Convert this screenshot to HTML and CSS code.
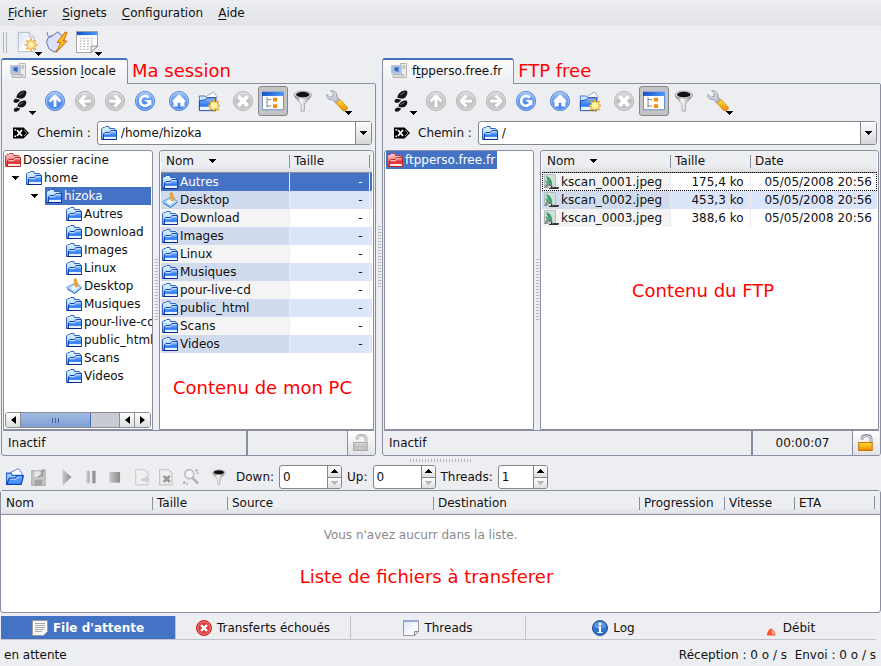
FILE: index.html
```html
<!DOCTYPE html>
<html lang="fr">
<head>
<meta charset="utf-8">
<title>Client FTP</title>
<link rel="stylesheet" href="styles.css">
</head>
<body>
<svg class="defs" aria-hidden="true">
  <defs>
    <linearGradient id="gBlue" x1="0" y1="0" x2="0" y2="1"><stop offset="0" stop-color="#a9c8fb"/><stop offset=".5" stop-color="#5a92ee"/><stop offset="1" stop-color="#3f82f4"/></linearGradient>
    <linearGradient id="gGrey" x1="0" y1="0" x2="0" y2="1"><stop offset="0" stop-color="#dedede"/><stop offset=".5" stop-color="#bfbfbf"/><stop offset="1" stop-color="#cbcbcb"/></linearGradient>
    <linearGradient id="gFold" x1="0" y1="0" x2="0" y2="1"><stop offset="0" stop-color="#e3f4ff"/><stop offset=".5" stop-color="#b5dafb"/><stop offset="1" stop-color="#3f80ec"/></linearGradient>
    <linearGradient id="gFront" x1="0" y1="0" x2="0" y2="1"><stop offset="0" stop-color="#8dbcfb"/><stop offset=".65" stop-color="#2474f2"/><stop offset=".75" stop-color="#e8f3ff"/></linearGradient>
    <linearGradient id="gRed" x1="0" y1="0" x2="0" y2="1"><stop offset="0" stop-color="#ffdada"/><stop offset="1" stop-color="#e02020"/></linearGradient>
    <linearGradient id="gRedFront" x1="0" y1="0" x2="0" y2="1"><stop offset="0" stop-color="#f08080"/><stop offset=".65" stop-color="#df2525"/><stop offset=".75" stop-color="#ffe8e8"/></linearGradient>
    <linearGradient id="gPage" x1="0" y1="0" x2="1" y2="1"><stop offset="0" stop-color="#d9e3fb"/><stop offset=".7" stop-color="#fff"/></linearGradient>
    <linearGradient id="gBar" x1="0" y1="0" x2="1" y2="0"><stop offset="0" stop-color="#174fc4"/><stop offset="1" stop-color="#4c9cff"/></linearGradient>
    <linearGradient id="gGold" x1="0" y1="0" x2="0" y2="1"><stop offset="0" stop-color="#ffe23a"/><stop offset="1" stop-color="#f48a00"/></linearGradient>
    <linearGradient id="gSteel" x1="0" y1="0" x2="1" y2="1"><stop offset="0" stop-color="#fff"/><stop offset="1" stop-color="#a3a9bf"/></linearGradient>
    <linearGradient id="gDark" x1="0" y1="0" x2="1" y2="0"><stop offset="0" stop-color="#c9c9c9"/><stop offset="1" stop-color="#8a8a8a"/></linearGradient>
    <linearGradient id="gCone" x1="0" y1="0" x2="1" y2="0"><stop offset="0" stop-color="#666"/><stop offset=".4" stop-color="#fff"/><stop offset="1" stop-color="#888"/></linearGradient>
  </defs>
  <symbol id="blue" viewBox="0 0 24 24"><circle cx="12" cy="12" r="10.5" fill="url(#gBlue)" stroke="#5b84c9"/><circle cx="12" cy="12" r="9.3" fill="none" stroke="#b7d0f8" stroke-width=".8"/></symbol>
  <symbol id="grey" viewBox="0 0 24 24"><circle cx="12" cy="12" r="10.5" fill="url(#gGrey)" stroke="#b3b3b3"/><circle cx="12" cy="12" r="9.3" fill="none" stroke="#dedede" stroke-width=".8"/></symbol>
  <symbol id="a-up" viewBox="0 0 24 24"><path d="M12 18.500V7M6 12.500 12 6.500 18 12.500" fill="none" stroke="#fff" stroke-width="3" stroke-linejoin="round"/></symbol>
  <symbol id="a-left" viewBox="0 0 24 24"><path d="M18.500 12H7M12.500 6 6.500 12 12.500 18" fill="none" stroke="#fff" stroke-width="3" stroke-linejoin="round"/></symbol>
  <symbol id="a-right" viewBox="0 0 24 24"><path d="M5.500 12H17M11.500 6 17.500 12 11.500 18" fill="none" stroke="#fff" stroke-width="3" stroke-linejoin="round"/></symbol>
  <symbol id="a-reload" viewBox="0 0 24 24"><path d="M16 8.2A5.4 5.4 0 1 0 17 14" fill="none" stroke="#fff" stroke-width="3"/><path d="M11 11h8v6z" fill="#fff"/></symbol>
  <symbol id="a-home" viewBox="0 0 24 24"><path d="m12 4.500 8 8h-2V18h-4.500v-4h-3v4H6v-5.500H4z" fill="#fff"/></symbol>
  <symbol id="a-x" viewBox="0 0 24 24"><path d="m7 7 10 10m0-10L7 17" stroke="#fff" stroke-width="4"/></symbol>
  <symbol id="feet" viewBox="0 0 24 24"><g fill="#151515"><path d="M7 8.500C7 4 12 0 16 .5c3 .5 2 4.500 0 7-1 1.200-2.500 1.500-4 2z"/><path d="M6.500 9.500 11 10.500c-1 3-4.500 4-6.500 3-1.500-1.500-.5-3.500 2-4z"/><path d="M8 18c.5-4 5-7.500 8.500-6.500 2.500 1.500 1 5-1 6.500-1 .8-2.500 1-4 1z"/><path d="m7 19 4 1c-.5 2.500-4 4.500-6 3.500-2-1.500-.5-4 2-4.500z"/></g><path d="M10 5.500 15 2.500M10 16l4.500-2.500" stroke="#777"/></symbol>
  <symbol id="newfolder" viewBox="0 0 24 24"><path d="m9 7 8-5 4 6-9 4z" fill="#fff" stroke="#7c8fb0" stroke-width=".8"/><path d="M1.500 20.500V6.500h6l2 2h9v12z" fill="#c9e5fc" stroke="#3d76c8"/><path d="M1.500 22.500V12l7-1.500 2-2h9v14z" fill="url(#gFront)" stroke="#15419f"/><path d="m17.500 10 1.300 3.500L22.500 12 21 15.500l3 1.500-3 1.500 1.500 3.500-3.700-1.500-1.300 3.500-1.300-3.500-3.700 1.500 1.500-3.500-3-1.500 3-1.500-1.500-3.500 3.700 1.500z" fill="#fff5a0" stroke="#e79a10"/></symbol>
  <symbol id="treeview" viewBox="0 0 24 24"><path d="M.5 2.500h23v19H.5z" fill="#fff" stroke="#5c86cc"/><path d="M0 2h24v4.500H0z" fill="url(#gBar)"/><path d="M5.500 8v11M5.500 10.500H10M5.500 17.500H10" fill="none" stroke="#777"/><path d="M12 8.500h4.500v4H12zM12 15.500h4.500v4H12z" fill="#f08a12"/></symbol>
  <symbol id="filter" viewBox="0 0 24 24"><path d="M2.500 5c0 5 7.500 8 7.500 11v7h3.500v-7c0-3 7.500-6 7.500-11z" fill="url(#gCone)" stroke="#888" stroke-width=".7"/><ellipse cx="11.800" cy="5" rx="9.500" ry="3.800" fill="#e6e6e6" stroke="#999" stroke-width=".8"/><ellipse cx="11.800" cy="5" rx="7.500" ry="3" fill="#111"/></symbol>
  <symbol id="wrench" viewBox="0 0 24 24"><path d="M5 .8C8 0 12.500 2.500 12 7.500l3 3.500-4 3.500-4-4C3 11 .3 8.500.8 5l3.700 3L8 6.500 7.500 3z" fill="url(#gSteel)" stroke="#7f849b" stroke-width=".8"/><path d="m15 10 8 8.500c1 3-2 5-4.500 4L11 14.500z" fill="url(#gGold)" stroke="#c77b16" stroke-width=".8"/></symbol>
  <symbol id="folder" viewBox="0 0 16 16"><path d="M.5 14.500V4L2 2.500h1.500l1-1H8l.5 2h5l1 1.500v9.500z" fill="url(#gFold)" stroke="#2c63c4"/><path d="M2.500 14.500V9L4 7.500h4.500L10 5.500h5.500v9z" fill="url(#gFront)" stroke="#1747b4"/><path d="M1 14.500h14.500" stroke="#0c2a94"/><path d="M3.500 8.700h5l1.500-2h4.500" fill="none" stroke="#d5e9ff"/></symbol>
  <symbol id="rootfolder" viewBox="0 0 16 16"><path d="M.5 14.500V4L2 2.500h1.500l1-1H8l.5 2h5l1 1.500v9.500z" fill="url(#gRed)" stroke="#cf3838"/><path d="M2.500 14.500V9L4 7.500h4.500L10 5.500h5.500v9z" fill="url(#gRedFront)" stroke="#bd2626"/><path d="M3.500 8.700h5l1.500-2h4.500" fill="none" stroke="#ffdcdc"/></symbol>
  <symbol id="desktop" viewBox="0 0 16 16"><path d="m.5 9.500 10-5 5 5.500-7 5.500z" fill="#a8d0fb" stroke="#6aa3e6"/><path d="m1 11 7.500 4.500 7-5.500" fill="none" stroke="#3c7bd6"/><path d="m4 9.500 6-3 3 3-5 3.500z" fill="#f2f9ff"/><path d="m8 1.500 2-1 2 7-1.500 2L9 8z" fill="#f8ae2c" stroke="#d77d16" stroke-width=".6"/></symbol>
  <symbol id="jpeg" viewBox="0 0 16 16"><path d="M1.500.5h11v13h-11z" fill="#d3dfdc" stroke="#b4bfbd"/><path d="M3 2c4 1 7 5 6 10L5 8z" fill="#3aa468"/><path d="M2 6c3 1 5 3 6 6l-4-1z" fill="#6f9c85"/><path d="m1 14 2-4 3 1-2 3z" fill="#8b918f"/><path d="m6 10 4 3.500h6" fill="none" stroke="#444"/><path d="M6 14.500h9.500M8.500 12v3m2.500-2v2m2.500-2v2" stroke="#333"/></symbol>
  <symbol id="host" viewBox="0 0 16 16"><path d="M9.500.5h6v14h-6z" fill="#ececef" stroke="#b5b5bc"/><path d="M11.500 3h2.500M11.500 5h2.500M11.500 12h2" stroke="#999"/><path d="M.5 2.500h10v8H.5z" fill="#a7c0e6" stroke="#c3c7d1"/><path d="m3.500 4.500 4-.5v5l-4-1.500z" fill="#3467bd"/><path d="M2 11.500h9l1 3H2z" fill="#ddd" stroke="#b5b5b5"/></symbol>
  <symbol id="clear" viewBox="0 0 16 16"><path d="M0 2.500h10.500L16 8l-5.500 5.500H0z" fill="#000"/><path d="m4 5 5 6m0-6-5 6" stroke="#fff" stroke-width="1.800"/><path d="M1.500 4h1.500v1.500H1.500zM1.500 10.500h1.500V12H1.500z" fill="#fff"/><path d="m11 5 3 3-3 3" fill="none" stroke="#888"/></symbol>
  <symbol id="newdoc" viewBox="0 0 24 24"><path d="M2.500 1.500h12l5 5v16h-17z" fill="url(#gPage)" stroke="#b3b7c2"/><path d="M14.500 1.500v5h5" fill="#edf1fb" stroke="#b3b7c2"/><path d="m16.500 8 1.300 3.500L21.500 10 20 13.500l3.500 1.500-3.500 1.500 1.500 3.500-3.700-1.500-1.300 3.500-1.300-3.500-3.700 1.500 1.500-3.500-3.500-1.500 3.500-1.500L11.500 10l3.700 1.500z" fill="#ffe590" stroke="#e9a732"/><circle cx="16.500" cy="15" r="2" fill="#fffbe0"/></symbol>
  <symbol id="connect" viewBox="0 0 24 24"><path d="m3 6 4-1 6-4 6 6 1 4-5 8-6 4-6-4-2.500-7z" fill="#dbe3fc" stroke="#7582b4" stroke-width="1.200"/><path d="M1.500 1v4l3 2 3-1.500" fill="none" stroke="#7582b4"/><path d="m21 1-9 11.500h4L11 23.500 23 11h-4l4-9z" fill="#ffbd17" stroke="#c9620c"/></symbol>
  <symbol id="calendar" viewBox="0 0 24 24"><path d="M.5.500h23v16l-7 7H.5z" fill="#fff" stroke="#999"/><path d="M1 1h22v3.500H1z" fill="url(#gBar)"/><path d="M4 8h16M4 11h16M4 14h15M4 17h11M4 20h10" stroke="#9c9ca5" stroke-dasharray="2 2"/><path d="M16.500 23.500v-7h7z" fill="#eee" stroke="#888"/></symbol>
  <symbol id="drop" viewBox="0 0 7 4"><path d="M0 0h7v1H6v1H5v1H4v1H3V3H2V2H1V1H0z"/></symbol>
  <symbol id="lock" viewBox="0 0 16 16"><path d="M4.500 5V4C5 .5 12 .5 12.500 4V8" fill="none" stroke="#8b8ea0" stroke-width="2.600"/><path d="M4.500 5V4C5 1 12 1 12.500 4V8" fill="none" stroke="#e4e5ee"/><path d="M1.500 7.500h12v7h-12z" fill="url(#gGold)" stroke="#c87a00"/></symbol>
  <symbol id="lockoff" viewBox="0 0 16 16"><path d="M4.500 5V4C5 .5 12 .5 12.500 4V8" fill="none" stroke="#b3b3b3" stroke-width="2.600"/><path d="M4.500 5V4C5 1 12 1 12.500 4V8" fill="none" stroke="#e8e8e8"/><path d="M1.500 7.500h12v7h-12z" fill="url(#gGrey)" stroke="#aaa"/></symbol>
  <symbol id="open" viewBox="0 0 16 16"><path d="m4 4 7-3.500L15 6 6 9z" fill="#fff" stroke="#5276bd" stroke-width=".8"/><path d="M.5 14V4.500h4l1 2h8V14z" fill="#9dcbff" stroke="#2b62c5"/><path d="M.5 14.500 3 9h5l2-2h5.500l-2 7.500z" fill="#4d94fb" stroke="#0d3cc4"/><path d="M3.500 10h5l2-2H14" fill="none" stroke="#b8dcff"/></symbol>
  <symbol id="save" viewBox="0 0 16 16"><path d="M1.500 2.500h12v13h-12z" fill="#c6c6c6" stroke="#b2b2b2"/><path d="M4 3h5v5H4z" fill="#e6e6e6"/><path d="M4 10.500h7v5H4z" fill="#a5a5a5"/><path d="M7 8l4-1.500V2h2.500" fill="none" stroke="#9a9a9a" stroke-width="1.500"/></symbol>
  <symbol id="play" viewBox="0 0 16 16"><path d="m4 1 8 7-8 7.500z" fill="url(#gDark)"/></symbol>
  <symbol id="pause" viewBox="0 0 16 16"><path d="M4 2.500h3v11H4zM9 2.500h3v11H9z" fill="url(#gDark)"/></symbol>
  <symbol id="stop" viewBox="0 0 16 16"><path d="M3 3.500h9.500V13H3z" fill="url(#gDark)"/></symbol>
  <symbol id="docarrow" viewBox="0 0 16 16"><path d="M1.500 1.500h8l3 3v10.500h-11z" fill="#f0f0f0" stroke="#ccc"/><path d="M6 9h4V6.500l4 3.500-4 3.500V11.500H6z" fill="#d0d0d0"/></symbol>
  <symbol id="docx" viewBox="0 0 16 16"><path d="M1.500 1.500h8l3 3v10.500h-11z" fill="#f0f0f0" stroke="#c3c3c3"/><path d="m5 7 5.500 5.500m0-5.500L5 12.500" stroke="#999" stroke-width="2.500"/></symbol>
  <symbol id="search" viewBox="0 0 16 16"><circle cx="6.500" cy="5.500" r="4" fill="#f3f3f3" stroke="#bbb" stroke-width="1.500"/><path d="m9.500 9 5 5" stroke="#b5b5b5" stroke-width="2.500"/><path d="M12 1h2v2h-2zM13 4h2v1h-2zM1 12h2v2H1zM4 13h1v2H4z" fill="#aaa"/></symbol>
  <symbol id="queue" viewBox="0 0 16 16"><path d="M.5.5h15v11l-4 4H.5z" fill="#f7f7f7" stroke="#9a9a9a"/><path d="M3 3.500h10M3 5.500h10M3 7.500h10M3 9.500h9M3 11.500h7" stroke="#aaa"/></symbol>
  <symbol id="note" viewBox="0 0 16 16"><path d="M.5.5h15v11l-4 4H.5z" fill="url(#gPage)" stroke="#999"/><path d="M0 0h16v2H0z" fill="#96aacb"/><path d="M11.500 15.500v-4h4z" fill="#eee" stroke="#888"/></symbol>
  <symbol id="fail" viewBox="0 0 16 16"><circle cx="8" cy="8" r="7.500" fill="#dc3c3c" stroke="#c22"/><circle cx="8" cy="8" r="6.200" fill="none" stroke="#f6a5a5" stroke-width=".7"/><path d="m5 5 6 6m0-6-6 6" stroke="#fff" stroke-width="2.400"/></symbol>
  <symbol id="info" viewBox="0 0 16 16"><circle cx="8" cy="8" r="7.500" fill="#2f74cb" stroke="#1e4f9c"/><path d="M2 7C2 0 14 0 14 7c-4 2-8 2-12 0z" fill="#7eabe4" opacity=".6"/><circle cx="8" cy="4" r="1.500" fill="#fff"/><path d="M6 6.500h3V12h1.500v1h-5v-1H7V7.500H6z" fill="#fff"/></symbol>
  <symbol id="rate" viewBox="0 0 16 16"><path d="M5 15.500C5 12 7 9 9 8.500c2 1 5 4 4.500 7z" fill="#f4552c"/><path d="m9 9.500 1 4 3 1.500c0-2-2-4-4-5.500z" fill="#ffb5a0"/></symbol>
  <symbol id="up" viewBox="0 0 7 4"><path d="M3 0h1v1h1v1h1v1h1v1H0V3h1V2h1V1h1z"/></symbol>
  <symbol id="tri-left" viewBox="0 0 5 8"><path d="M5 0v8L0 4z"/></symbol>
  <symbol id="tri-right" viewBox="0 0 5 8"><path d="M0 0v8l5-4z"/></symbol>
</svg>

<nav class="menubar">
  <a href="#"><u>F</u>ichier</a><a href="#"><u>S</u>ignets</a><a href="#"><u>C</u>onfiguration</a><a href="#"><u>A</u>ide</a>
</nav>
<div class="main-tools">
  <span class="grip"></span>
  <button class="tool" aria-label="Nouvelle session"><svg class="i24"><use href="#newdoc"/></svg><svg class="drop"><use href="#drop"/></svg></button>
  <button class="tool" aria-label="Connexion"><svg class="i24"><use href="#connect"/></svg></button>
  <button class="tool" aria-label="Signets"><svg class="i24"><use href="#calendar"/></svg><svg class="drop"><use href="#drop"/></svg></button>
</div>

<main class="sessions">
  <section class="session">
    <header class="tabrow">
      <button class="tab"><svg class="i16"><use href="#host"/></svg><span>Session <u>l</u>ocale</span></button>
      <strong class="remark">Ma session</strong>
    </header>
    <div class="panel">
      <div class="tools">
        <button class="tool feet" aria-label="Historique"><svg class="i24"><use href="#feet"/></svg><svg class="drop"><use href="#drop"/></svg></button>
        <button class="tool" aria-label="Monter"><svg class="i24"><use href="#blue"/><use href="#a-up"/></svg></button>
        <button class="tool" aria-label="Précédent"><svg class="i24"><use href="#grey"/><use href="#a-left"/></svg></button>
        <button class="tool" aria-label="Suivant"><svg class="i24"><use href="#grey"/><use href="#a-right"/></svg></button>
        <button class="tool" aria-label="Recharger"><svg class="i24"><use href="#blue"/><use href="#a-reload"/></svg></button>
        <button class="tool group" aria-label="Dossier personnel"><svg class="i24"><use href="#blue"/><use href="#a-home"/></svg></button>
        <button class="tool" aria-label="Nouveau dossier"><svg class="i24"><use href="#newfolder"/></svg></button>
        <button class="tool group" aria-label="Arrêter"><svg class="i24"><use href="#grey"/><use href="#a-x"/></svg></button>
        <button class="tool pressed" aria-label="Arborescence"><svg class="i24"><use href="#treeview"/></svg></button>
        <button class="tool" aria-label="Filtrer"><svg class="i24"><use href="#filter"/></svg></button>
        <button class="tool group" aria-label="Options"><svg class="i24"><use href="#wrench"/></svg><svg class="drop"><use href="#drop"/></svg></button>
      </div>
      <div class="address">
        <button class="clear" aria-label="Effacer"><svg class="i16"><use href="#clear"/></svg></button>
        <label for="path1">Chemin :</label>
        <div class="combo"><svg class="i16"><use href="#folder"/></svg><input id="path1" type="text" value="/home/hizoka"><button aria-label="Dérouler"><svg class="mark"><use href="#drop"/></svg></button></div>
      </div>
      <div class="split">
        <div class="box tree">
          <ul>
            <li><svg class="i16"><use href="#rootfolder"/></svg><span>Dossier racine</span></li>
            <li class="l1"><svg class="mark"><use href="#drop"/></svg><svg class="i16"><use href="#folder"/></svg><span>home</span></li>
            <li class="l2"><svg class="mark"><use href="#drop"/></svg><div class="selected"><svg class="i16"><use href="#folder"/></svg><span>hizoka</span></div></li>
            <li class="l3"><svg class="i16"><use href="#folder"/></svg><span>Autres</span></li>
            <li class="l3"><svg class="i16"><use href="#folder"/></svg><span>Download</span></li>
            <li class="l3"><svg class="i16"><use href="#folder"/></svg><span>Images</span></li>
            <li class="l3"><svg class="i16"><use href="#folder"/></svg><span>Linux</span></li>
            <li class="l3"><svg class="i16"><use href="#desktop"/></svg><span>Desktop</span></li>
            <li class="l3"><svg class="i16"><use href="#folder"/></svg><span>Musiques</span></li>
            <li class="l3"><svg class="i16"><use href="#folder"/></svg><span>pour-live-cd</span></li>
            <li class="l3"><svg class="i16"><use href="#folder"/></svg><span>public_html</span></li>
            <li class="l3"><svg class="i16"><use href="#folder"/></svg><span>Scans</span></li>
            <li class="l3"><svg class="i16"><use href="#folder"/></svg><span>Videos</span></li>
          </ul>
          <div class="scroll">
            <button aria-label="Gauche"><svg class="tri"><use href="#tri-left"/></svg></button>
            <span class="thumb"><i></i><i></i><i></i></span><span class="track"></span>
            <button aria-label="Gauche"><svg class="tri"><use href="#tri-left"/></svg></button>
            <button aria-label="Droite"><svg class="tri"><use href="#tri-right"/></svg></button>
          </div>
        </div>
        <div class="sash"></div>
        <div class="box list">
          <table class="files local">
            <colgroup><col class="c-name"><col class="c-size"><col></colgroup>
            <thead><tr><th><span>Nom<svg class="mark"><use href="#drop"/></svg></span></th><th><span>Taille</span></th><th><span></span></th></tr></thead>
            <tbody>
              <tr class="selected"><td><svg class="i16"><use href="#folder"/></svg>Autres</td><td>-</td><td></td></tr>
              <tr><td><svg class="i16"><use href="#desktop"/></svg>Desktop</td><td>-</td><td></td></tr>
              <tr><td><svg class="i16"><use href="#folder"/></svg>Download</td><td>-</td><td></td></tr>
              <tr><td><svg class="i16"><use href="#folder"/></svg>Images</td><td>-</td><td></td></tr>
              <tr><td><svg class="i16"><use href="#folder"/></svg>Linux</td><td>-</td><td></td></tr>
              <tr><td><svg class="i16"><use href="#folder"/></svg>Musiques</td><td>-</td><td></td></tr>
              <tr><td><svg class="i16"><use href="#folder"/></svg>pour-live-cd</td><td>-</td><td></td></tr>
              <tr><td><svg class="i16"><use href="#folder"/></svg>public_html</td><td>-</td><td></td></tr>
              <tr><td><svg class="i16"><use href="#folder"/></svg>Scans</td><td>-</td><td></td></tr>
              <tr><td><svg class="i16"><use href="#folder"/></svg>Videos</td><td>-</td><td></td></tr>
            </tbody>
          </table>
          <strong class="remark local-note">Contenu de mon PC</strong>
        </div>
      </div>
      <footer class="state"><span class="grow">Inactif</span><span class="time"></span><button aria-label="Verrou"><svg class="i18"><use href="#lockoff"/></svg></button></footer>
    </div>
  </section>
  <div class="sash"></div>
  <section class="session">
    <header class="tabrow">
      <button class="tab"><svg class="i16"><use href="#host"/></svg><span>f<u>t</u>pperso.free.fr</span></button>
      <strong class="remark">FTP free</strong>
    </header>
    <div class="panel">
      <div class="tools">
        <button class="tool feet" aria-label="Historique"><svg class="i24"><use href="#feet"/></svg><svg class="drop"><use href="#drop"/></svg></button>
        <button class="tool" aria-label="Monter"><svg class="i24"><use href="#grey"/><use href="#a-up"/></svg></button>
        <button class="tool" aria-label="Précédent"><svg class="i24"><use href="#grey"/><use href="#a-left"/></svg></button>
        <button class="tool" aria-label="Suivant"><svg class="i24"><use href="#grey"/><use href="#a-right"/></svg></button>
        <button class="tool" aria-label="Recharger"><svg class="i24"><use href="#blue"/><use href="#a-reload"/></svg></button>
        <button class="tool group" aria-label="Dossier personnel"><svg class="i24"><use href="#blue"/><use href="#a-home"/></svg></button>
        <button class="tool" aria-label="Nouveau dossier"><svg class="i24"><use href="#newfolder"/></svg></button>
        <button class="tool group" aria-label="Arrêter"><svg class="i24"><use href="#grey"/><use href="#a-x"/></svg></button>
        <button class="tool pressed" aria-label="Arborescence"><svg class="i24"><use href="#treeview"/></svg></button>
        <button class="tool" aria-label="Filtrer"><svg class="i24"><use href="#filter"/></svg></button>
        <button class="tool group" aria-label="Options"><svg class="i24"><use href="#wrench"/></svg><svg class="drop"><use href="#drop"/></svg></button>
      </div>
      <div class="address">
        <button class="clear" aria-label="Effacer"><svg class="i16"><use href="#clear"/></svg></button>
        <label for="path2">Chemin :</label>
        <div class="combo"><svg class="i16"><use href="#folder"/></svg><input id="path2" type="text" value="/"><button aria-label="Dérouler"><svg class="mark"><use href="#drop"/></svg></button></div>
      </div>
      <div class="split">
        <div class="box tree">
          <ul><li><div class="selected fit"><svg class="i16"><use href="#rootfolder"/></svg><span>ftpperso.free.fr</span></div></li></ul>
        </div>
        <div class="sash"></div>
        <div class="box list">
          <table class="files remote">
            <colgroup><col class="c-name"><col class="c-size"><col></colgroup>
            <thead><tr><th><span>Nom<svg class="mark"><use href="#drop"/></svg></span></th><th><span>Taille</span></th><th><span>Date</span></th></tr></thead>
            <tbody>
              <tr class="current"><td><svg class="i16"><use href="#jpeg"/></svg>kscan_0001.jpeg</td><td>175,4 ko</td><td>05/05/2008 20:56</td></tr>
              <tr><td><svg class="i16"><use href="#jpeg"/></svg>kscan_0002.jpeg</td><td>453,3 ko</td><td>05/05/2008 20:56</td></tr>
              <tr><td><svg class="i16"><use href="#jpeg"/></svg>kscan_0003.jpeg</td><td>388,6 ko</td><td>05/05/2008 20:56</td></tr>
            </tbody>
          </table>
          <strong class="remark remote-note">Contenu du FTP</strong>
        </div>
      </div>
      <footer class="state"><span class="grow">Inactif</span><span class="time">00:00:07</span><button aria-label="Verrou"><svg class="i18"><use href="#lock"/></svg></button></footer>
    </div>
  </section>
</main>

<div class="hsash"></div>
<section class="queue-tools">
  <button class="qtool" aria-label="Ouvrir"><svg class="i18"><use href="#open"/></svg></button>
  <button class="qtool" aria-label="Enregistrer"><svg class="i18"><use href="#save"/></svg></button>
  <button class="qtool gap" aria-label="Démarrer"><svg class="i18"><use href="#play"/></svg></button>
  <button class="qtool" aria-label="Pause"><svg class="i18"><use href="#pause"/></svg></button>
  <button class="qtool" aria-label="Arrêter"><svg class="i18"><use href="#stop"/></svg></button>
  <button class="qtool gap" aria-label="Ajouter"><svg class="i18"><use href="#docarrow"/></svg></button>
  <button class="qtool" aria-label="Supprimer"><svg class="i18"><use href="#docx"/></svg></button>
  <button class="qtool" aria-label="Rechercher"><svg class="i18"><use href="#search"/></svg></button>
  <button class="qtool gap" aria-label="Filtrer"><svg class="i16"><use href="#filter"/></svg></button>
  <label for="down">Down:</label>
  <div class="spin"><input id="down" type="text" value="0"><div><button aria-label="Plus"><svg class="mark"><use href="#up"/></svg></button><button aria-label="Moins" disabled><svg class="mark"><use href="#drop"/></svg></button></div></div>
  <label for="upl">Up:</label>
  <div class="spin"><input id="upl" type="text" value="0"><div><button aria-label="Plus"><svg class="mark"><use href="#up"/></svg></button><button aria-label="Moins" disabled><svg class="mark"><use href="#drop"/></svg></button></div></div>
  <label for="thr">Threads:</label>
  <div class="spin small"><input id="thr" type="text" value="1"><div><button aria-label="Plus"><svg class="mark"><use href="#up"/></svg></button><button aria-label="Moins" disabled><svg class="mark"><use href="#drop"/></svg></button></div></div>
</section>

<section class="box queue">
  <table class="transfers">
    <colgroup><col class="q1"><col class="q2"><col class="q3"><col class="q3"><col class="q5"><col class="q6"><col class="q7"><col></colgroup>
    <thead><tr><th><span>Nom</span></th><th><span>Taille</span></th><th><span>Source</span></th><th><span>Destination</span></th><th><span>Progression</span></th><th><span>Vitesse</span></th><th><span>ETA</span></th><th></th></tr></thead>
  </table>
  <div class="empty"><p>Vous n'avez aucurr dans la liste.</p><strong class="remark">Liste de fichiers à transferer</strong></div>
</section>

<nav class="bottom-tabs">
  <button class="active"><svg class="i16"><use href="#queue"/></svg>File d'attente</button>
  <button><svg class="i16"><use href="#fail"/></svg>Transferts échoués</button>
  <button><svg class="i16"><use href="#note"/></svg>Threads</button>
  <button class="plain"><svg class="i16"><use href="#info"/></svg>Log</button>
  <button class="plain"><svg class="i16"><use href="#rate"/></svg>Débit</button>
</nav>
<footer class="statusbar"><span>en attente</span><span class="rates">Réception : 0 o / s&nbsp; Envoi : 0 o / s</span></footer>
</body>
</html>
```
FILE: styles.css
```css
* { box-sizing: border-box; }
body {
  margin: 0;
  min-height: 100vh;
  display: flex;
  flex-direction: column;
  background: #edeef2;
  color: #111;
  font: 12px/18px "DejaVu Sans", sans-serif;
  overflow: hidden;
}
button, input {
  font: inherit;
  color: inherit;
  background: none;
  border: 0;
  padding: 0;
  margin: 0;
  min-width: 0;
  outline: 0;
}
svg { display: block; flex: none; }
u { text-underline-offset: 2px; }
.defs { position: absolute; width: 0; height: 0; }
.i24 { width: 22px; height: 22px; }
.i18 { width: 18px; height: 18px; }
.i16 { width: 16px; height: 16px; }
.mark { width: 7px; height: 4px; }
.remark { color: #f00; font-size: 18px; font-weight: 400; white-space: nowrap; }

.menubar {
  display: flex;
  gap: 15px;
  height: 26px;
  padding: 4px 8px;
  background: linear-gradient(#edeef2, #e2e3e6);
}
.menubar a { color: inherit; text-decoration: none; }
.main-tools { display: flex; align-items: center; height: 32px; padding-left: 3px; }
.grip { width: 4px; height: 21px; margin-right: 5px; border: solid #b4b6bf; border-width: 0 1px; }
.tool { position: relative; width: 30px; height: 30px; display: flex; align-items: center; justify-content: center; }
.drop { position: absolute; right: 0; bottom: 1px; width: 7px; height: 4px; }

.sessions { flex: 1; display: grid; grid-template-columns: 375fr 6px 499fr; padding-left: 1px; }
.session { min-width: 0; display: flex; flex-direction: column; }
.tabrow { display: flex; align-items: center; gap: 4px; height: 26px; }
.tab {
  z-index: 1;
  align-self: stretch;
  display: flex;
  align-items: center;
  gap: 5px;
  padding: 0 11px 2px 8px;
  border: 1px solid #8b8ea0;
  border-top: 2px solid #4472b8;
  border-bottom: 0;
  border-radius: 3px 3px 0 0;
  background: linear-gradient(#fdfdfe, #edeef2);
}
.panel {
  flex: 1;
  margin-top: -1px;
  padding: 2px 1px 0;
  display: flex;
  flex-direction: column;
  border: 1px solid #8b8ea0;
  border-radius: 0 2px 3px 3px;
}
.tools { display: flex; padding-left: 3px; }
.tools .feet { margin-right: 4px; }
.tools .group { margin-left: 4px; }
.pressed { border: 1px solid #858585; border-radius: 3px; background: #c4c4c4; }
.address { display: flex; align-items: center; padding: 5px 2px 5px 10px; }
.address label { margin: 0 6px 0 8px; }
.combo {
  flex: 1;
  display: flex;
  align-items: center;
  height: 24px;
  padding-left: 3px;
  border: 1px solid #85858d;
  border-radius: 3px;
  background: #fff;
}
.combo input { flex: 1; padding-left: 4px; }
.combo button {
  align-self: stretch;
  width: 16px;
  display: flex;
  align-items: center;
  justify-content: center;
  border-left: 1px solid #85858d;
  background: linear-gradient(#fdfdfd, #d5d6d9);
}
.split { flex: 1; display: flex; }
.box { background: #fff; border: 1px solid #8b8ea0; border-radius: 3px 3px 0 0; }
.tree { width: 150px; flex: none; display: flex; flex-direction: column; justify-content: space-between; padding: 0 1px 1px; overflow: hidden; }
.sash { width: 6px; background: repeating-linear-gradient(#b5b6bb 0 1px, transparent 1px 3px) center / 3px 62px no-repeat; }
.tree ul { list-style: none; margin: 0; padding: 0; }
.tree li, .tree .selected { display: flex; align-items: center; gap: 2px; height: 18px; white-space: nowrap; }
.tree li > .mark { margin-right: 5px; }
.tree .l1 { padding-left: 7px; }
.tree .l2 { padding-left: 26px; }
.tree .l3 { padding-left: 61px; }
.selected { background: #4472c4; color: #fff; }
.tree .selected { flex: 1; padding-left: 1px; }
.tree .fit { flex: none; padding-right: 2px; }
.scroll { display: flex; height: 16px; border: 1px solid #8b8c92; border-radius: 3px; overflow: hidden; }
.scroll button { width: 15px; display: flex; align-items: center; justify-content: center; border-right: 1px solid #8b8c92; background: linear-gradient(#fff, #dcdde0); }
.scroll button:last-child { border-right: 0; }
.tri { width: 5px; height: 8px; }
.thumb { flex: 5; display: flex; align-items: center; justify-content: center; gap: 2px; border-right: 1px solid #446db3; background: linear-gradient(#a3bbe2, #7d9fd4); }
.thumb i { width: 1px; height: 5px; background: #4266a5; }
.track { flex: 2; background: #c9cbd4; border-right: 1px solid #8b8c92; }

.list { flex: 1; min-width: 0; padding: 0 1px; display: flex; flex-direction: column; }
table { width: 100%; border-collapse: collapse; table-layout: fixed; }
th {
  height: 21px;
  padding: 0;
  font-weight: 400;
  text-align: left;
  background: linear-gradient(#edeef2 70%, #dddee1);
  border-bottom: 1px solid #8b8ea0;
}
th span { display: flex; align-items: center; gap: 15px; height: 13px; padding-left: 4px; border-left: 1px solid #8b8ea0; white-space: nowrap; }
th:first-child span { padding-left: 5px; border-left: 0; }
.files td { height: 18px; padding: 0; line-height: 18px; white-space: nowrap; }
.files td:first-child { display: flex; align-items: center; gap: 2px; padding-left: 1px; background: #f4f4f4; }
.files td + td { text-align: right; border-left: 1px solid #ececf0; }
.files td:nth-child(2) { padding-right: 6px; }
.files td:nth-child(3) { padding-right: 5px; }
.files tbody tr:nth-child(even) { background: #dbe4f8; }
.files tbody tr:nth-child(even) td:first-child { background: #d1dbee; }
.files tbody tr.selected, .files .selected td:first-child { background: #4472c4; }
.files .current { outline: 1px dotted #000; outline-offset: -1px; }
.local .c-name, .remote .c-name { width: 128px; }
.c-size { width: 80px; }
.local-note { margin: 26px auto 0 12px; }
.remote-note { margin: 55px 0 0 90px; }

.state { display: flex; height: 25px; border-top: 1px solid #8b8ea0; }
.state span { padding: 3px 5px; border-right: 2px solid #8b8ea0; }
.state .grow { flex: 1; }
.state .time { width: 100px; text-align: center; border-right-width: 1px; }
.state button { width: 26px; display: flex; align-items: center; justify-content: center; background: linear-gradient(#fff, #e1e2e5); }

.hsash { height: 8px; background: repeating-linear-gradient(90deg, #b5b6bb 0 1px, transparent 1px 3px) center / 62px 3px no-repeat; }
.queue-tools { display: flex; align-items: center; height: 26px; padding-left: 3px; }
.qtool { width: 24px; height: 24px; display: flex; align-items: center; justify-content: center; }
.qtool.gap { margin-left: 4px; }
.queue-tools label { margin: 0 5px; }
.spin { display: flex; width: 63px; height: 24px; border: 1px solid #85858d; border-radius: 3px; background: #fff; overflow: hidden; }
.spin.small { width: 50px; }
.spin input { flex: 1; padding-left: 3px; }
.spin > div { width: 14px; display: flex; flex-direction: column; border-left: 1px solid #85858d; }
.spin button { flex: 1; display: flex; align-items: center; justify-content: center; background: linear-gradient(#fff, #dddee1); }
.spin button + button { border-top: 1px solid #85858d; fill: #b5b6ba; }

.queue { min-height: 123px; border-radius: 3px; }
.transfers th { height: 23px; padding-top: 2px; }
.q1 { width: 151px; }
.q2 { width: 75px; }
.q3 { width: 206px; }
.q5 { width: 85px; }
.q6 { width: 70px; }
.q7 { width: 80px; }
.transfers th:last-child { background: linear-gradient(#8b8ea0, #8b8ea0) left center / 1px 13px no-repeat, linear-gradient(#edeef2 70%, #dddee1); }
.empty { display: flex; flex-direction: column; align-items: center; gap: 24px; padding: 11px 28px 0 0; }
.empty p { margin: 0 12px 0 0; color: #8a8a8a; }

.bottom-tabs { display: grid; grid-template-columns: repeat(5, 1fr); height: 24px; margin: 3px 5px 0 1px; border-bottom: 1px solid #c3c4c8; }
.bottom-tabs button { display: flex; align-items: center; justify-content: center; gap: 5px; border-right: 1px solid #c3c4c8; }
.bottom-tabs .active { background: #4472c4; color: #fff; font-weight: 700; }
.bottom-tabs .plain { border-right: 0; }
.statusbar { display: flex; justify-content: space-between; align-items: center; height: 26px; padding: 4px 5px 0 4px; }
```
